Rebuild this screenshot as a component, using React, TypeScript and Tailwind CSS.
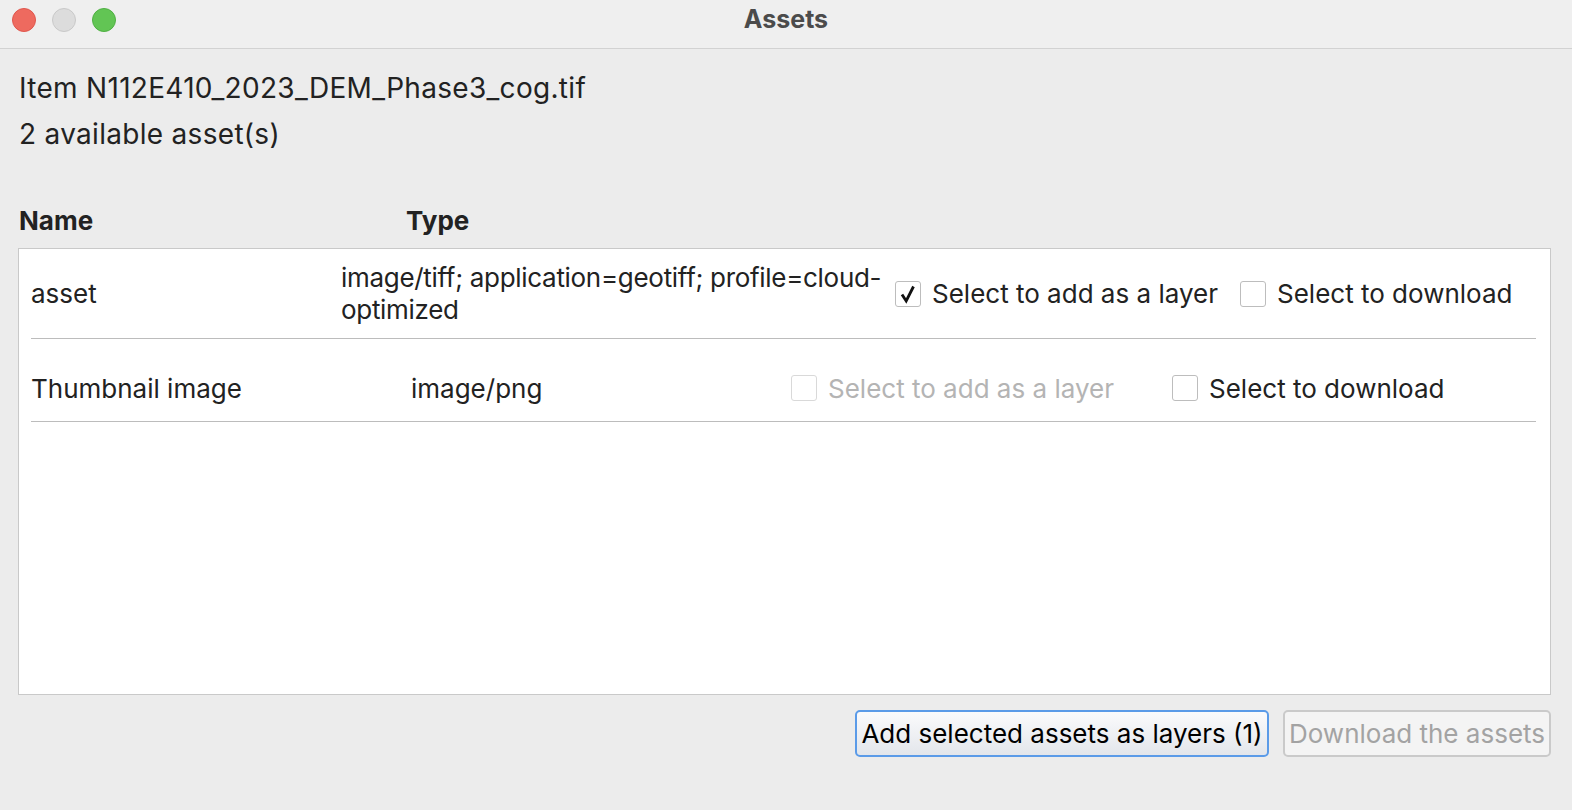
import type { ReactNode } from 'react'

const FONT = { fontFamily: 'Inter, "Noto Sans", "Liberation Sans", sans-serif' }

function TrafficLights() {
  return (
    <div className="absolute left-[12px] top-[8px] flex gap-[16px]">
      <span className="h-[24px] w-[24px] rounded-full border border-[#e0564d] bg-[#ee6a5f]" />
      <span className="h-[24px] w-[24px] rounded-full border border-[#c9c9c9] bg-[#dcdcdc]" />
      <span className="h-[24px] w-[24px] rounded-full border border-[#4fb043] bg-[#62c554]" />
    </div>
  )
}

function Checkbox({ checked = false, disabled = false }: { checked?: boolean; disabled?: boolean }) {
  return (
    <span
      className={
        'flex h-[26px] w-[26px] shrink-0 items-center justify-center rounded-[3px] border bg-white ' +
        (disabled ? 'border-[#d9d9d9]' : 'border-[#bdbdbd]')
      }
    >
      {checked && (
        <svg width="20" height="20" viewBox="0 0 20 20">
          <path d="M4 10.5 L8.2 17 L15.5 2.5" fill="none" stroke="#111" strokeWidth="2.8" strokeLinecap="butt" strokeLinejoin="miter" />
        </svg>
      )}
    </span>
  )
}

function Option({ label, checked, disabled, width }: { label: string; checked?: boolean; disabled?: boolean; width: string }) {
  return (
    <div className={'flex shrink-0 items-center gap-[11px] ' + width}>
      <Checkbox checked={checked} disabled={disabled} />
      <span className={'whitespace-nowrap ' + (disabled ? 'text-[#b4b4b4]' : 'text-[#222]')}>{label}</span>
    </div>
  )
}

function Row({ children, className }: { children: ReactNode; className: string }) {
  return <div className={'flex items-center border-b border-[#bcbcbc] ' + className}>{children}</div>
}

export default function App() {
  return (
    <div className="flex h-[810px] w-full flex-col bg-[#ececec] text-[26px] text-[#222]" style={FONT}>
      {/* title bar */}
      <div className="relative flex h-[49px] shrink-0 items-center justify-center border-b border-[#d2d2d2] bg-[#efefef]">
        <TrafficLights />
        <span className="pb-[10px] text-[25px] font-bold leading-none text-[#4b4b4b]">Assets</span>
      </div>

      <div className="flex flex-col px-[18px] pr-[21px]">
        <div className="pt-[16px] pl-[1px] text-[28px] tracking-[0.3px]">
          <div className="h-[46px] leading-[46px]">Item N112E410_2023_DEM_Phase3_cog.tif</div>
          <div className="h-[46px] leading-[46px]">2 available asset(s)</div>
        </div>

        <div className="mt-[40px] mb-[5px] flex h-[46px] items-center pl-[1px] font-bold">
          <span className="w-[387px]">Name</span>
          <span>Type</span>
        </div>

        <div className="h-[447px] border border-[#c9c9c9] bg-white pl-[12px] pr-[14px]">
          <Row className="h-[90px]">
            <span className="w-[310px] shrink-0">asset</span>
            <span className="w-[554px] shrink-0 whitespace-nowrap leading-[32px] tracking-[-0.3px]">
              image/tiff; application=geotiff; profile=cloud-
              <br />
              optimized
            </span>
            <Option label="Select to add as a layer" checked width="w-[345px]" />
            <Option label="Select to download" width="w-auto" />
          </Row>
          <Row className="h-[83px] pt-[16px]">
            <span className="w-[380px] shrink-0">Thumbnail image</span>
            <span className="w-[380px] shrink-0">image/png</span>
            <Option label="Select to add as a layer" disabled width="w-[381px]" />
            <Option label="Select to download" width="w-auto" />
          </Row>
        </div>

        <div className="mt-[15px] flex justify-end gap-[14px]">
          <button className="flex h-[47px] w-[414px] items-center justify-center rounded-[5px] border-2 border-[#5b9be8] bg-gradient-to-b from-[#fbfbfc] to-[#e3e6eb] text-[26px] text-black">
            Add selected assets as layers (1)
          </button>
          <button className="flex h-[47px] w-[268px] items-center justify-center rounded-[5px] border-2 border-[#cacaca] bg-[#f4f4f4] text-[26px] text-[#a3a3a3]">
            Download the assets
          </button>
        </div>
      </div>
    </div>
  )
}
